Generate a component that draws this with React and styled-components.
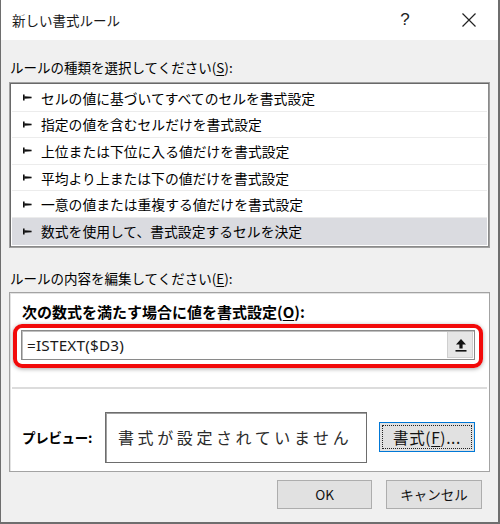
import React from 'react'
import styled, { createGlobalStyle } from 'styled-components'

const GlobalStyle = createGlobalStyle`
  html, body {
    margin: 0;
    padding: 0;
    background: #f0f0f0;
  }
  body {
    font-family: "Noto Sans CJK JP", "Noto Sans", sans-serif;
    color: #000;
  }
`

const Dialog = styled.div`
  box-sizing: border-box;
  width: 500px;
  height: 524px;
  display: flex;
  flex-direction: column;
  background: #f0f0f0;
  border-left: 1px solid #6e6e6e;
  border-right: 2px solid #6e6e6e;
  border-bottom: 2px solid #6e6e6e;
  overflow: hidden;
`

const TitleBar = styled.div`
  height: 40px;
  flex: none;
  display: flex;
  align-items: center;
  background: #fff;
  padding-left: 11px;
`

const Title = styled.div`
  flex: 1;
  font-size: 13.5px;
  color: #1a1a1a;
`

const HelpButton = styled.div`
  width: 20px;
  margin-right: 46px;
  font-family: "Liberation Sans", sans-serif;
  font-size: 17px;
  text-align: center;
  color: #222;
`

const CloseButton = styled.div`
  width: 16px;
  height: 16px;
  margin-right: 21px;
  display: flex;
  align-items: center;
  justify-content: center;
`

const Body = styled.div`
  flex: 1;
  display: flex;
  flex-direction: column;
  padding: 0 8px;
`

const SectionLabel = styled.div`
  height: 20px;
  line-height: 20px;
  font-size: 13.5px;
  margin: ${p => p.$top}px 0 ${p => p.$bottom}px 1px;
  white-space: nowrap;

  u {
    text-decoration: underline;
    text-underline-offset: 2px;
  }
`

const RuleList = styled.div`
  border: 1px solid #a0a0a0;
  box-shadow: inset 1px 1px 0 #696969, inset -1px -1px 0 #8a8a8a;
  padding: 2px;
  background: #fff;
  display: flex;
  flex-direction: column;
`

const RuleRow = styled.div`
  box-sizing: border-box;
  height: 26.6px;
  display: flex;
  align-items: center;
  padding-left: 11px;
  gap: 9px;
  font-size: 13.8px;
  background: ${p => (p.$selected ? '#dadbe0' : '#fff')};
  border-bottom: 1px solid ${p => (p.$selected ? '#dadbe0' : '#ececec')};

  &:last-child {
    border-bottom: none;
  }
`

const RulePanel = styled.div`
  border: 1px solid #a3a3a3;
  box-shadow: inset 1px 1px 0 #e2e2e2;
  background: #fff;
  padding: 8px 2px 8px 2px;
  display: flex;
  flex-direction: column;
`

const FormulaLabel = styled.div`
  height: 22px;
  line-height: 22px;
  font-size: 15px;
  font-weight: 700;
  margin-left: 10px;
  white-space: nowrap;

  u {
    text-underline-offset: 2px;
  }
`

const Highlight = styled.div`
  margin: 1px 4px 0 1px;
  padding: 2px 4px 4px 4px;
  border: 4px solid #f20a0a;
  border-radius: 9px;
  box-shadow: 0 1px 4px rgba(0, 0, 0, 0.35);
`

const FormulaInput = styled.div`
  box-sizing: border-box;
  height: 30px;
  display: flex;
  align-items: center;
  background: #fff;
  border: 1px solid #8a8a8a;
  box-shadow: inset 1px 1px 0 #bfbfbf;
  padding: 0 1px 0 5px;
`

const FormulaText = styled.div`
  flex: 1;
  font-family: "Noto Sans", sans-serif;
  font-size: 15.3px;
  color: #1a1a1a;
  letter-spacing: 0.2px;
`

const CollapseButton = styled.div`
  width: 25px;
  height: 26px;
  display: flex;
  align-items: center;
  justify-content: center;
  background: #e6e6e6;
  border-left: 1px solid #cfcfcf;
  box-shadow: inset -1px -1px 0 #d0d0d0;
`

const Divider = styled.div`
  height: 2px;
  background: #dcdcdc;
  margin: 19px 0 0 0;
`

const PreviewRow = styled.div`
  display: flex;
  align-items: center;
  margin-top: 23px;
  padding-left: 10px;
`

const PreviewLabel = styled.div`
  width: 83px;
  font-size: 13.5px;
  font-weight: 700;
  letter-spacing: -0.3px;
`

const PreviewBox = styled.div`
  box-sizing: border-box;
  width: 262px;
  height: 51px;
  display: flex;
  align-items: center;
  padding-left: 12px;
  border: 1px solid #6d6d6d;
  box-shadow: inset 1px 1px 0 #a0a0a0;
  font-size: 16px;
  letter-spacing: 3.6px;
  color: #2b2b2b;
  white-space: nowrap;
`

const Button = styled.div`
  box-sizing: border-box;
  width: ${p => p.$width}px;
  height: ${p => p.$height}px;
  display: flex;
  align-items: center;
  justify-content: center;
  background: #e1e1e1;
  border: 1px solid ${p => (p.$focused ? '#0078d7' : '#adadad')};
  font-size: ${p => p.$fontSize || 13.5}px;
  color: #111;
  position: relative;

  u {
    text-underline-offset: 2px;
  }
`

const FocusRing = styled.span`
  position: absolute;
  inset: 2px;
  border: 1px dotted #222;
`

const ButtonLabel = styled.span`
  position: relative;
  letter-spacing: 0.6px;
`

const FormatButtonSlot = styled.div`
  margin-left: 12px;
`

const Footer = styled.div`
  display: flex;
  justify-content: flex-end;
  gap: 14px;
  margin: 8px 8px 0 0;
`

const RuleArrow = () => (
  <svg width="9" height="7" viewBox="0 0 9 7">
    <rect x="0" y="0.5" width="1.6" height="6" fill="#111" />
    <polygon points="1.2,2.2 8.6,2.8 8.6,4.2 1.2,4.8" fill="#111" />
  </svg>
)

const CloseIcon = () => (
  <svg width="14" height="14" viewBox="0 0 14 14">
    <path d="M0.5 0.5 L13.5 13.5 M13.5 0.5 L0.5 13.5" stroke="#222" strokeWidth="1.2" />
  </svg>
)

const UploadIcon = () => (
  <svg width="12" height="14" viewBox="0 0 12 14">
    <polygon points="6,1 11,6.5 7.6,6.5 7.6,10.5 4.4,10.5 4.4,6.5 1,6.5" fill="#111" />
    <rect x="0.5" y="12" width="11" height="1.6" fill="#111" />
  </svg>
)

const rules = [
  'セルの値に基づいてすべてのセルを書式設定',
  '指定の値を含むセルだけを書式設定',
  '上位または下位に入る値だけを書式設定',
  '平均より上または下の値だけを書式設定',
  '一意の値または重複する値だけを書式設定',
  '数式を使用して、書式設定するセルを決定'
]

const App = () => (
  <>
    <GlobalStyle />
    <Dialog>
      <TitleBar>
        <Title>新しい書式ルール</Title>
        <HelpButton>?</HelpButton>
        <CloseButton>
          <CloseIcon />
        </CloseButton>
      </TitleBar>
      <Body>
        <SectionLabel $top={17} $bottom={5}>
          ルールの種類を選択してください(<u>S</u>):
        </SectionLabel>
        <RuleList>
          {rules.map((rule, i) => (
            <RuleRow key={rule} $selected={i === rules.length - 1}>
              <RuleArrow />
              {rule}
            </RuleRow>
          ))}
        </RuleList>
        <SectionLabel $top={20} $bottom={4}>
          ルールの内容を編集してください(<u>E</u>):
        </SectionLabel>
        <RulePanel>
          <FormulaLabel>
            次の数式を満たす場合に値を書式設定(<u>O</u>):
          </FormulaLabel>
          <Highlight>
            <FormulaInput>
              <FormulaText>=ISTEXT($D3)</FormulaText>
              <CollapseButton>
                <UploadIcon />
              </CollapseButton>
            </FormulaInput>
          </Highlight>
          <Divider />
          <PreviewRow>
            <PreviewLabel>プレビュー:</PreviewLabel>
            <PreviewBox>書式が設定されていません</PreviewBox>
            <FormatButtonSlot>
              <Button $width={96} $height={30} $fontSize={15.5} $focused>
                <FocusRing />
                <ButtonLabel>
                  書式(<u>F</u>)...
                </ButtonLabel>
              </Button>
            </FormatButtonSlot>
          </PreviewRow>
        </RulePanel>
        <Footer>
          <Button $width={95} $height={29}>OK</Button>
          <Button $width={96} $height={29}>キャンセル</Button>
        </Footer>
      </Body>
    </Dialog>
  </>
)

export default App
